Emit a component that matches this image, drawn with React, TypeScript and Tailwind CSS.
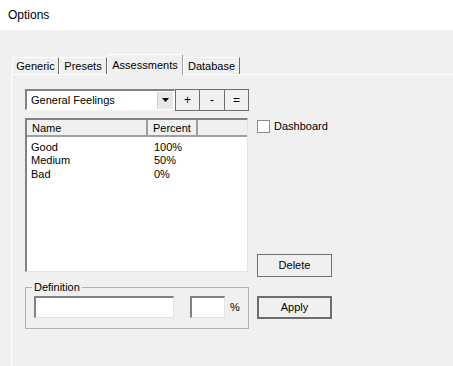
import React from "react";

const rows = [
  { name: "Good", percent: "100%" },
  { name: "Medium", percent: "50%" },
  { name: "Bad", percent: "0%" },
];

const tabs = [
  { label: "Generic", width: "w-[47px]" },
  { label: "Presets", width: "w-[48px]" },
  { label: "Assessments", width: "w-[76px]", active: true },
  { label: "Database", width: "w-[57px]" },
];

export default function App() {
  return (
    <div className="w-[453px] h-[366px] overflow-hidden bg-[#f0f0f0] font-['Liberation_Sans',Arial,sans-serif] text-[11px] text-black">
      {/* タイトル */}
      <div className="flex h-[30px] items-center bg-white pl-2 text-[12px]">Options</div>

      {/* タブ */}
      <div className="ml-[12px] mt-[24px] flex h-[20px] items-end">
        {tabs.map((t) =>
          t.active ? (
            <div
              key={t.label}
              className={`${t.width} relative z-10 -mb-px flex h-[21px] items-start justify-center border-l border-t border-r border-l-white border-t-white border-r-[#a0a0a0] bg-[#f0f0f0] pt-[2px]`}
            >
              {t.label}
            </div>
          ) : (
            <div
              key={t.label}
              className={`${t.width} flex h-[17px] items-center justify-center border-l border-t border-r border-l-white border-t-white border-r-[#696969] bg-[#f0f0f0] pt-px`}
            >
              {t.label}
            </div>
          )
        )}
      </div>

      {/* タブパネル */}
      <div className="ml-[11px] h-[300px] border-l border-t border-white pl-[13px] pt-[14px]">
        <div className="flex">
          {/* 左カラム */}
          <div className="w-[224px]">
            <div className="flex h-[21px] items-center">
              <div className="flex h-[21px] w-[150px] items-center border-l-2 border-t-2 border-b border-r border-l-[#828282] border-t-[#828282] border-b-white border-r-white bg-white">
                <span className="flex-1 pl-[4px]">General Feelings</span>
                <div className="mr-px flex h-[17px] w-[16px] items-center justify-center border-l border-[#d0d0d0] bg-[#e8e8e8]">
                  <svg width="7" height="4" viewBox="0 0 7 4">
                    <path d="M0 0h7L3.5 4z" fill="#000" />
                  </svg>
                </div>
              </div>
              <div className="flex">
                {["+", "-", "="].map((s, i) => (
                  <div
                    key={s}
                    className={`flex h-[22px] ${i === 1 ? "w-[26px]" : "w-[25px]"} items-center justify-center border border-[#6d6d6d] bg-[#f0f0f0] text-[12px] ${i > 0 ? "-ml-px" : ""}`}
                  >
                    {s}
                  </div>
                ))}
              </div>
            </div>

            {/* リスト */}
            <div className="mt-[8px] h-[154px] w-[223px] border-l-2 border-t-2 border-b border-r border-l-[#828282] border-t-[#828282] border-b-[#e3e3e3] border-r-[#e3e3e3] bg-white">
              <div className="flex h-[17px] border-b-2 border-b-[#a0a0a0] bg-[#f0f0f0]">
                <div className="w-[121px] border-r-2 border-r-[#a0a0a0] pl-[5px] leading-[16px]">Name</div>
                <div className="w-[50px] border-r-2 border-r-[#a0a0a0] pl-[5px] leading-[16px]">Percent</div>
                <div className="flex-1" />
              </div>
              <div className="pt-[3px]">
                {rows.map((r) => (
                  <div key={r.name} className="flex h-[13.5px] items-center">
                    <span className="w-[127px] pl-[4px]">{r.name}</span>
                    <span>{r.percent}</span>
                  </div>
                ))}
              </div>
            </div>

            {/* Definition */}
            <div className="relative mt-[15px] h-[42px] w-[224px] border border-[#b0b0b0] px-[8px] pt-[8px]">
              <span className="absolute -top-[8px] left-[6px] bg-[#f0f0f0] px-[2px] leading-[14px]">Definition</span>
              <div className="flex items-center">
                <div className="h-[22px] w-[140px] border-l-2 border-t-2 border-b border-r border-l-[#828282] border-t-[#828282] border-b-[#e3e3e3] border-r-[#e3e3e3] bg-white" />
                <div className="ml-[16px] h-[22px] w-[35px] border-l-2 border-t-2 border-b border-r border-l-[#828282] border-t-[#828282] border-b-[#e3e3e3] border-r-[#e3e3e3] bg-white" />
                <span className="ml-[5px]">%</span>
              </div>
            </div>
          </div>

          {/* 右カラム */}
          <div className="ml-[8px] flex flex-col pt-[30px]">
            <div className="flex h-[14px] items-center">
              <div className="h-[13px] w-[13px] border border-[#8a8a8a] bg-white" />
              <span className="ml-[4px]">Dashboard</span>
            </div>
            <div className="mt-[121px] flex h-[23px] w-[75px] items-center justify-center border border-[#707070] bg-[#f0f0f0]">
              Delete
            </div>
            <div className="mt-[19px] flex h-[23px] w-[75px] items-center justify-center border-2 border-[#6d6d6d] bg-[#f0f0f0]">
              Apply
            </div>
          </div>
        </div>
      </div>
    </div>
  );
}
